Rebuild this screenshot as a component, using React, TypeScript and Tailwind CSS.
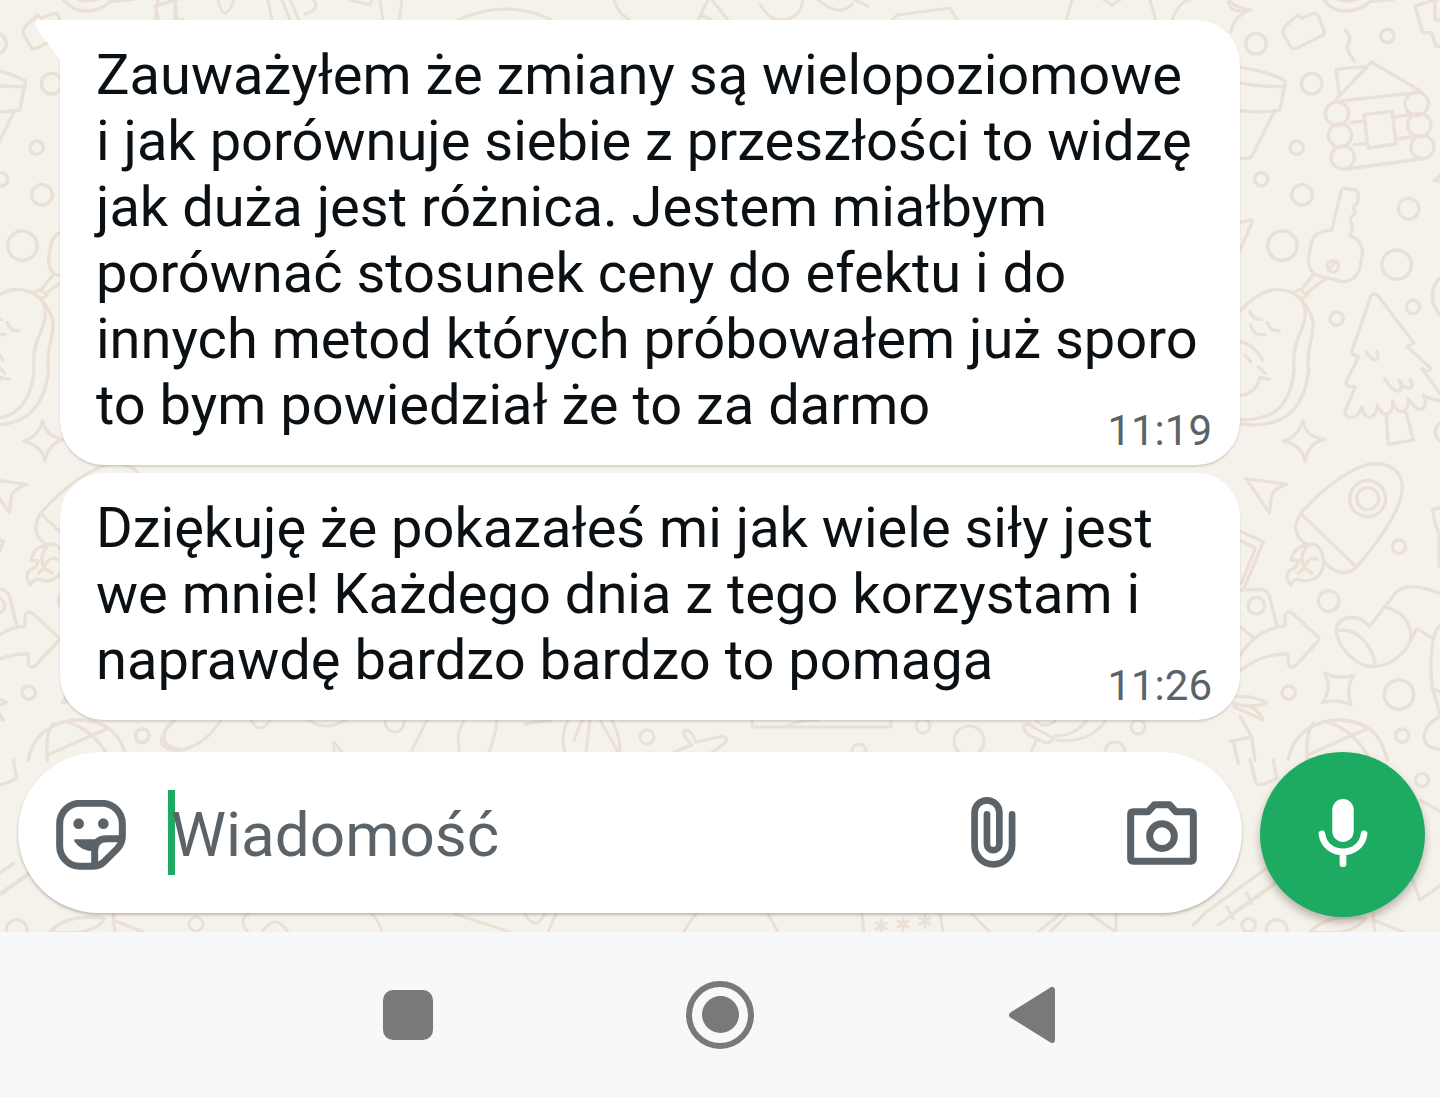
import { ReactNode } from 'react';

const messages = [
  {
    text: 'Zauważyłem że zmiany są wielopoziomowe i jak porównuje siebie z przeszłości to widzę jak duża jest różnica. Jestem miałbym porównać stosunek ceny do efektu i do innych metod których próbowałem już sporo to bym powiedział że to za darmo',
    time: '11:19',
  },
  {
    text: 'Dziękuję że pokazałeś mi jak wiele siły jest we mnie! Każdego dnia z tego korzystam i naprawdę bardzo bardzo to pomaga',
    time: '11:26',
  },
];

// The side doodles repeat every 1260px, so they are drawn once and placed twice
function SideDoodles() {
  return (
    <g transform="scale(0.33333)" strokeWidth="10">
      {/* sparkle, cookie, toast */}
      <path d="M0 5 Q20 25 62 30 Q15 45 2 95 M275 -10 Q300 33 348 33 Q390 33 420 5 L490 -2 M310 -10 Q350 16 395 -8" />
      <path d="M170 75 L203 45 L215 55 L250 40 Q262 38 266 50 L283 95 Q285 102 278 106 L200 145 Q188 150 182 140 L160 102 Q156 90 170 75Z" />
      <path d="M650 -10 L555 18 L578 98 L605 98 L618 140 L650 138 M615 0 V60 H640" />
      <circle cx="78" cy="131" r="31" />
      <circle cx="472" cy="108" r="20" />
      <circle cx="245" cy="251" r="31" />
      <circle cx="200" cy="443" r="20" />
      <circle cx="94" cy="538" r="20" />
      <circle cx="216" cy="584" r="31" />
      <circle cx="536" cy="626" r="31" />
      <circle cx="157" cy="737" r="44" />
      <circle cx="500" cy="794" r="44" />
      <circle cx="320" cy="956" r="20" />
      <circle cx="549" cy="921" r="20" />
      {/* cup */}
      <path d="M-80 190 Q90 200 165 242 Q168 248 165 260 Q60 262 -60 230 M165 250 L150 330 Q60 345 -30 320 M132 335 L66 468 Q60 476 45 476 H0" />
      {/* cabin with smoke */}
      <path d="M345 90 Q368 110 352 138 Q350 155 374 184 M328 285 L318 208 L400 200 M315 302 L424 186 L575 275 M330 303 L565 277 M362 368 L400 363 M372 434 L410 430 M492 351 L535 345 M500 417 L540 411 M350 507 L580 476 M402 344 L486 334 L498 432 L414 444Z" />
      <circle cx="321" cy="341" r="35" />
      <circle cx="330" cy="406" r="35" />
      <circle cx="338" cy="472" r="35" />
      <circle cx="560" cy="311" r="35" />
      <circle cx="568" cy="375" r="35" />
      <circle cx="577" cy="441" r="35" />
      <path d="M650 510 L612 542 L650 544 M-20 680 L62 660 Q70 660 66 668 L30 750" />
      {/* key */}
      <path d="M305 692 L333 575 Q335 564 348 565 L375 570 Q387 573 385 587 L382 610 L370 620 L375 640 L360 655 L367 680 L360 708 Q400 720 397 765 L388 810 Q375 845 335 845 L262 826 Q232 815 236 770 L245 725 Q258 690 305 692Z" />
      <circle cx="309" cy="799" r="17" />
      <path d="M298 805 L312 790 M248 826 L215 868 M292 832 L232 878 M190 880 L208 868 L232 885 L214 898Z" />
      {/* fish */}
      <path d="M28 935 Q90 868 145 868 Q225 875 226 940 C225 1000 185 1010 192 1110 C180 1240 110 1260 28 1260 M210 895 C290 980 220 1020 236 1110 C220 1250 140 1285 30 1272" />
      <path d="M60 935 Q70 960 95 958 M62 975 Q70 1010 105 1003 M112 968 Q120 995 148 992 M28 1025 Q70 1030 98 1080 M45 1065 L62 1085 M85 1100 L105 1120 M28 1187 Q80 1180 90 1132 L118 1138" />
      {/* tree */}
      <path d="M430 882 Q440 880 446 890 L552 1028 L532 1040 L602 1105 Q600 1120 575 1105 L630 1180 M430 882 Q422 886 420 896 L366 1052 Q364 1066 386 1070 L348 1146 Q346 1162 376 1160 L344 1238 Q348 1258 376 1250 Q390 1240 396 1220 Q400 1252 418 1252 Q440 1250 442 1215 Q455 1250 475 1240 Q490 1230 488 1205 Q500 1240 520 1235 Q536 1225 534 1195 Q555 1230 575 1228 Q595 1218 580 1185 Q610 1205 650 1202" />
      <path d="M468 1240 L475 1333 L550 1320 L528 1238 M464 1135 Q490 1180 510 1172 Q518 1155 506 1140 Q530 1175 546 1160 Q548 1148 540 1140 M408 1055 Q430 1085 440 1078 Q448 1065 440 1055 M650 820 C595 850 590 920 650 960" />
      {/* rocket */}
      <g transform="translate(0 1080)">
        <path d="M218 182 Q228 232 284 239 Q235 248 225 303 Q215 255 160 243 Q205 232 218 182Z" />
        <path d="M48 356 L170 373 Q130 388 125 405 L118 458Z" />
        <path d="M212 460 C300 360 390 310 440 310 C500 315 520 350 516 390 C510 460 440 550 380 622 C350 648 310 640 282 605 M212 460 Q175 520 232 555 L250 552 M212 460 L380 622" />
        <circle cx="413" cy="416" r="54" />
        <circle cx="413" cy="416" r="33" />
        <path d="M232 555 Q190 560 184 600 L205 602 Q200 625 180 630 Q160 650 182 675 Q190 650 220 662 Q270 665 280 615 Q280 560 250 552 M232 558 Q205 590 222 622 Q240 585 262 598 M205 640 Q225 615 245 640" />
        <circle cx="507" cy="560" r="20" />
        <circle cx="296" cy="723" r="31" />
        <circle cx="176" cy="998" r="20" />
        <circle cx="507" cy="1004" r="44" />
        <circle cx="517" cy="1127" r="20" />
        <circle cx="79" cy="737" r="25" />
        <circle cx="650" cy="216" r="34" />
        <path d="M28 512 L100 545 L40 690 M28 540 L76 564 L34 670 M30 690 L95 688 Q112 692 118 708 L140 795 M30 800 L72 835" />
        {/* arrow, sock, star */}
        <path d="M28 890 Q80 805 165 798 V765 Q175 748 190 762 L265 832 Q270 840 262 846 L195 918 Q180 926 175 912 V882 Q90 880 20 940" />
        <path d="M318 805 Q330 770 370 772 Q400 775 418 800 L500 695 Q540 660 640 705 M318 805 C320 860 380 925 435 920 C490 915 540 870 543 825 C540 780 510 750 465 742 M325 812 C380 800 430 860 436 918 M543 840 L560 806 L610 835" />
        <path d="M282 938 Q325 960 372 946 Q345 985 364 1034 Q320 1015 276 1028 Q310 985 282 938Z" />
        <path d="M640 440 L608 448 Q615 500 628 520 V620 M640 790 C600 800 600 920 606 970 C612 1020 628 1030 628 1070 C570 1100 560 1170 640 1168 M606 985 L640 1000" />
        {/* ball, bow */}
        <path d="M175 1200 C190 1110 270 1080 325 1080 C400 1082 450 1110 472 1200 M232 1200 Q225 1120 250 1090 M290 1085 Q370 1110 415 1190 M232 1185 L415 1105" />
        <path d="M20 1010 Q70 1005 110 1028 Q70 1045 12 1032 M12 1040 L100 1080 Q80 1040 45 1035 M30 1070 L65 1130 L75 1200 M0 1145 L65 1130 M10 1145 L25 1210" />
        <path d="M60 1200 L78 1268 Q80 1285 140 1255 L130 1200" />
      </g>
      {/* flute, twigs along the bottom edge */}
      <path d="M15 2735 L260 2560 M-35 2775 L180 2620 M-110 2775 L-70 2735 L130 2590 M-10 2720 L10 2755 M50 2680 L65 2710 M570 2400 L640 2440 M540 2620 L570 2700 L640 2650" />
      <circle cx="56" cy="2776" r="20" />
      <circle cx="140" cy="2790" r="31" />
      <path d="M240 2796 Q290 2740 405 2755 Q370 2810 240 2796 M430 2740 Q430 2790 440 2810 M430 2760 L520 2796" />
      <circle cx="576" cy="2340" r="20" />
    </g>
  );
}

function Wallpaper() {
  return (
    <svg
      className="absolute inset-0 h-full w-full"
      viewBox="0 0 1440 932"
      preserveAspectRatio="xMinYMin slice"
      fill="none"
      stroke="#eae0d5"
      strokeWidth="3"
      strokeLinecap="round"
      strokeLinejoin="round"
      aria-hidden="true"
    >
      <g transform="translate(-30 0)">
        <SideDoodles />
      </g>
      <g transform="translate(1230 0)">
        <SideDoodles />
      </g>
      {/* strip above the first bubble */}
      <path d="M158 0 L155 20 M175 0 L177 20 M218 0 Q224 26 234 0 M268 0 L272 20 M282 0 L290 20 M290 0 L299 20 M305 14 Q320 10 314 0 M350 0 L370 5 L372 0 M380 0 L383 20 M402 0 L399 20 M458 20 Q505 -2 552 20 M614 0 Q618 14 630 20 M708 0 L698 20 M712 0 L728 20 M700 15 L712 20 M760 5 Q770 20 780 20 Q800 20 803 0 M818 0 Q840 18 852 4 M855 0 L868 6 M892 20 L897 15 L950 8 L957 20 M1066 20 L1072 0 M1104 0 L1112 5 L1120 0 M1150 0 L1156 20 M1172 20 Q1180 0 1190 0 M1228 2 Q1231 14 1248 10" />
      {/* strip between the second bubble and the input */}
      <circle cx="142" cy="736" r="7" />
      <path d="M176 720 C152 740 160 752 182 750 C205 744 214 730 221 720 M251 720 Q260 736 270 720 M308 720 Q327 732 345 720 M334 752 V742 L342 752 M385 720 C385 736 405 736 404 720 M427 720 L412 750 M464 720 L458 734 L459 752 M497 720 Q496 735 489 752 M525 724 L552 720 M568 720 Q560 735 565 752 M582 720 L574 740 M590 720 L586 752 M600 720 L618 752 M612 720 Q620 735 620 752" />
      <circle cx="647" cy="737" r="7" />
      <path d="M674 752 L692 745 Q682 735 684 731 Q690 727 696 742 L723 736 Q730 738 724 744 L712 752 M752 720 V727 H891 V720 M784 727 Q805 718 820 720" />
      <circle cx="923" cy="726" r="7" />
      <circle cx="969" cy="741" r="15" />
      <circle cx="859" cy="751" r="7" />
      <path d="M1023 726 Q1028 722 1035 728 L1053 738 Q1052 744 1043 742 L1027 734Z M1036 720 Q1043 730 1055 721 M1055 736 Q1075 736 1087 720 M1056 740 Q1090 744 1106 720 M1036 741 L1031 752" />
      <circle cx="1138" cy="727" r="7" />
      <circle cx="1115" cy="752" r="10" />
      {/* strip below the input */}
      <circle cx="196" cy="924" r="7" />
      <path d="M248 932 Q238 920 248 914 M262 932 Q275 912 288 932 M370 912 Q380 922 382 932 M455 914 L510 932 M525 914 Q535 932 545 914 M556 914 L548 932 M684 932 Q690 920 696 914 M768 914 L778 932 M862 914 L864 932 M940 914 L943 932 M972 914 L990 932 M1038 932 L1060 914 M1050 932 L1066 916 M1090 914 L1116 932 V914" />
      <path d="M881 920 V932 M876 923 L886 929 M886 923 L876 929 M903 918 V930 M898 921 L908 927 M908 921 L898 927 M925 915 V927 M920 918 L930 924 M930 918 L920 924" />
    </svg>
  );
}

function Bubble({ text, time, tail }: { text: string; time: string; tail?: boolean }) {
  return (
    <article
      className={`relative grid rounded-[44px] bg-white px-7 pt-[22px] pb-[27px] shadow-[0_2px_2px_rgba(120,120,100,0.25)] ${
        tail ? 'rounded-tl-none' : ''
      }`}
    >
      {tail && (
        <svg className="absolute top-0 -left-[26px] h-[42px] w-7" viewBox="0 0 28 42" aria-hidden="true">
          <path d="M28 0 H7 Q-2 1 3 9 L28 42Z" fill="#fff" />
        </svg>
      )}
      <p className="col-start-1 row-start-1 px-2 text-[56px] leading-[66px] text-[#0a1014]">{text}</p>
      <time className="col-start-1 row-start-1 -mb-[17px] self-end justify-self-end text-[42px] leading-[48px] text-[#5b6368]">
        {time}
      </time>
    </article>
  );
}

function StickerIcon() {
  return (
    <svg className="h-[70px] w-[70px]" viewBox="0 0 210 210" fill="none" stroke="currentColor" strokeWidth="21">
      <path d="M72 10 H138 A61 61 0 0 1 199 71 V108 Q199 130 184 146 L146 184 Q130 199 108 199 H72 A61 61 0 0 1 11 138 V71 A61 61 0 0 1 72 10Z" />
      <path d="M199 116 H152 Q116 116 116 152 V199" />
      <path d="M55 118 H128 L116 154 Q74 154 55 124Z" fill="currentColor" stroke="none" />
      <circle cx="68" cy="71" r="16" fill="currentColor" stroke="none" />
      <circle cx="142" cy="71" r="16" fill="currentColor" stroke="none" />
    </svg>
  );
}

function ClipIcon() {
  return (
    <svg
      className="h-[71px] w-[45px]"
      viewBox="0 0 133 212"
      fill="none"
      stroke="currentColor"
      strokeWidth="20"
      strokeLinecap="round"
    >
      <path d="M122 52 V145 A56 56 0 0 1 10 145 V47 A37 37 0 0 1 84 47 V140 A18 18 0 0 1 47 140 V52" />
    </svg>
  );
}

function CameraIcon() {
  return (
    <svg
      className="h-16 w-[70px]"
      viewBox="0 0 210 191"
      fill="none"
      stroke="currentColor"
      strokeWidth="21"
      strokeLinejoin="round"
    >
      <path d="M19 32 H63 L82 11 H128 L147 32 H191 Q199 32 199 40 V172 Q199 180 191 180 H19 Q11 180 11 172 V40 Q11 32 19 32Z" />
      <circle cx="105" cy="105" r="37" />
    </svg>
  );
}

function MicIcon() {
  return (
    <svg
      className="h-[68px] w-[50px]"
      viewBox="0 0 148 203"
      fill="none"
      stroke="currentColor"
      strokeWidth="20"
      strokeLinecap="round"
    >
      <rect x="42" y="0" width="64" height="128" rx="32" fill="currentColor" stroke="none" />
      <path d="M11 104 C20 176 128 176 137 104 M74 160 V193" />
    </svg>
  );
}

function NavButton({ label, children }: { label: string; children: ReactNode }) {
  return (
    <button type="button" aria-label={label} className="flex h-[72px] w-[72px] items-center justify-center">
      {children}
    </button>
  );
}

export default function App() {
  return (
    <div className="min-h-screen bg-[#f7f8fa] font-[Roboto,sans-serif]">
      <main className="relative overflow-hidden bg-[#f5f2eb] pt-5 pb-[15px]">
        <Wallpaper />

        <section className="relative mr-[200px] ml-[60px] flex flex-col gap-2">
          {messages.map((m, i) => (
            <Bubble key={m.time} text={m.text} time={m.time} tail={i === 0} />
          ))}
        </section>

        <form className="relative mt-8 flex items-start gap-[18px] pr-[15px] pl-[18px]">
          <div className="flex h-[161px] min-w-0 flex-1 items-center rounded-full bg-white pr-[45px] pl-[38px] text-[#5b6368] shadow-[0_2px_3px_rgba(90,80,70,0.35)]">
            <button type="button" aria-label="Naklejki" className="mr-[42px] shrink-0 pt-1">
              <StickerIcon />
            </button>
            <span className="h-[85px] w-[7px] shrink-0 bg-[#1daa61]" />
            <input
              type="text"
              aria-label="Wiadomość"
              placeholder="Wiadomość"
              className="-ml-1 h-[85px] min-w-0 flex-1 bg-transparent pt-1 text-[62px] outline-none placeholder:text-[#5b6368]"
            />
            <button type="button" aria-label="Załącz" className="mr-[111px] shrink-0">
              <ClipIcon />
            </button>
            <button type="button" aria-label="Aparat" className="shrink-0">
              <CameraIcon />
            </button>
          </div>
          <button
            type="button"
            aria-label="Nagraj wiadomość głosową"
            className="flex h-[165px] w-[165px] shrink-0 items-center justify-center rounded-full bg-[#1daa61] pb-1 text-white shadow-[0_5px_8px_rgba(90,80,70,0.4)]"
          >
            <MicIcon />
          </button>
        </form>
      </main>

      <nav className="flex h-[165px] items-center justify-center gap-60 text-[#797979]">
        <NavButton label="Ostatnie aplikacje">
          <span className="h-[50px] w-[50px] rounded-[10px] bg-current" />
        </NavButton>
        <NavButton label="Ekran główny">
          <span className="flex h-[68px] w-[68px] items-center justify-center rounded-full border-[6px] border-current">
            <span className="h-[37px] w-[37px] rounded-full bg-current" />
          </span>
        </NavButton>
        <NavButton label="Wstecz">
          <svg className="h-[58px] w-[46px]" viewBox="0 0 46 58" fill="currentColor" stroke="currentColor" strokeWidth="6" strokeLinejoin="round">
            <path d="M3 29 L43 4 V54Z" />
          </svg>
        </NavButton>
      </nav>
    </div>
  );
}
